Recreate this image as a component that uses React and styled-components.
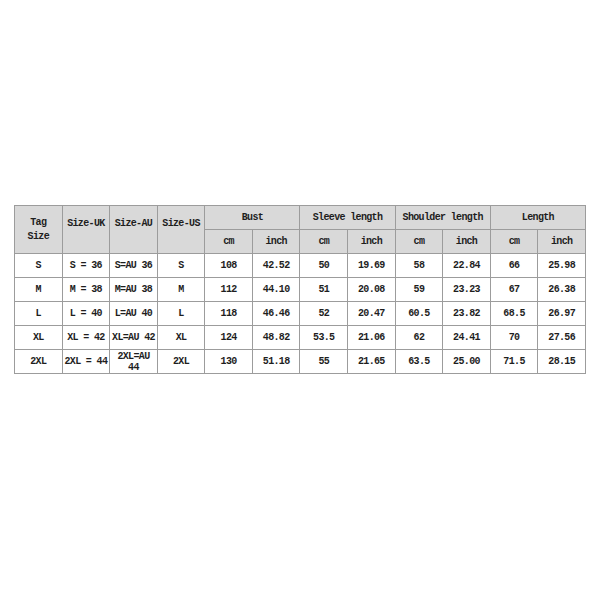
import React from 'react';
import styled, { createGlobalStyle } from 'styled-components';

const GlobalStyle = createGlobalStyle`
    body {
        margin: 0;
        background: #ffffff;
    }
`;

const Page = styled.div`
    width: 600px;
    height: 600px;
    box-sizing: border-box;
    padding: 205px 14px 0;
`;

const Table = styled.table`
    width: 572px;
    table-layout: fixed;
    border-collapse: collapse;
    font-family: "Liberation Mono", "DejaVu Sans Mono", monospace;
    font-weight: bold;
    font-size: 10px;
    letter-spacing: -0.65px;
    color: #1e1e1e;
`;

const Cell = styled.td`
    height: 23px;
    padding: 0;
    border: 1px solid #9c9c9c;
    text-align: center;
    vertical-align: middle;
    line-height: ${({ tall }) => (tall ? '14px' : '11px')};
    white-space: pre-wrap;
    background: ${({ head }) => (head ? '#d9d9d9' : '#ffffff')};
    padding-bottom: ${({ raised }) => (raised ? '12px' : '0')};
`;

const sizeCols = ['Tag\nSize', 'Size-UK', 'Size-AU', 'Size-US'];
const groups = ['Bust', 'Sleeve length', 'Shoulder length', 'Length'];

const rows = [
    ['S', 'S = 36', 'S=AU 36', 'S', '108', '42.52', '50', '19.69', '58', '22.84', '66', '25.98'],
    ['M', 'M = 38', 'M=AU 38', 'M', '112', '44.10', '51', '20.08', '59', '23.23', '67', '26.38'],
    ['L', 'L = 40', 'L=AU 40', 'L', '118', '46.46', '52', '20.47', '60.5', '23.82', '68.5', '26.97'],
    ['XL', 'XL = 42', 'XL=AU 42', 'XL', '124', '48.82', '53.5', '21.06', '62', '24.41', '70', '27.56'],
    ['2XL', '2XL = 44', '2XL=AU\n44', '2XL', '130', '51.18', '55', '21.65', '63.5', '25.00', '71.5', '28.15'],
];

function App() {
    return (
        <Page>
            <GlobalStyle />
            <Table>
                <colgroup>
                    {Array.from({ length: 12 }).map((_, i) => <col key={i} />)}
                </colgroup>
                <thead>
                    <tr>
                        {sizeCols.map((c, i) => (
                            <Cell as="th" key={c} head rowSpan={2} tall={i === 0} raised={i > 0}>{c}</Cell>
                        ))}
                        {groups.map((g) => (
                            <Cell as="th" key={g} head colSpan={2}>{g}</Cell>
                        ))}
                    </tr>
                    <tr>
                        {groups.map((g) => (
                            <React.Fragment key={g}>
                                <Cell as="th" head>cm</Cell>
                                <Cell as="th" head>inch</Cell>
                            </React.Fragment>
                        ))}
                    </tr>
                </thead>
                <tbody>
                    {rows.map((r) => (
                        <tr key={r[0]}>
                            {r.map((v, i) => <Cell key={i}>{v}</Cell>)}
                        </tr>
                    ))}
                </tbody>
            </Table>
        </Page>
    );
}

export default App;
